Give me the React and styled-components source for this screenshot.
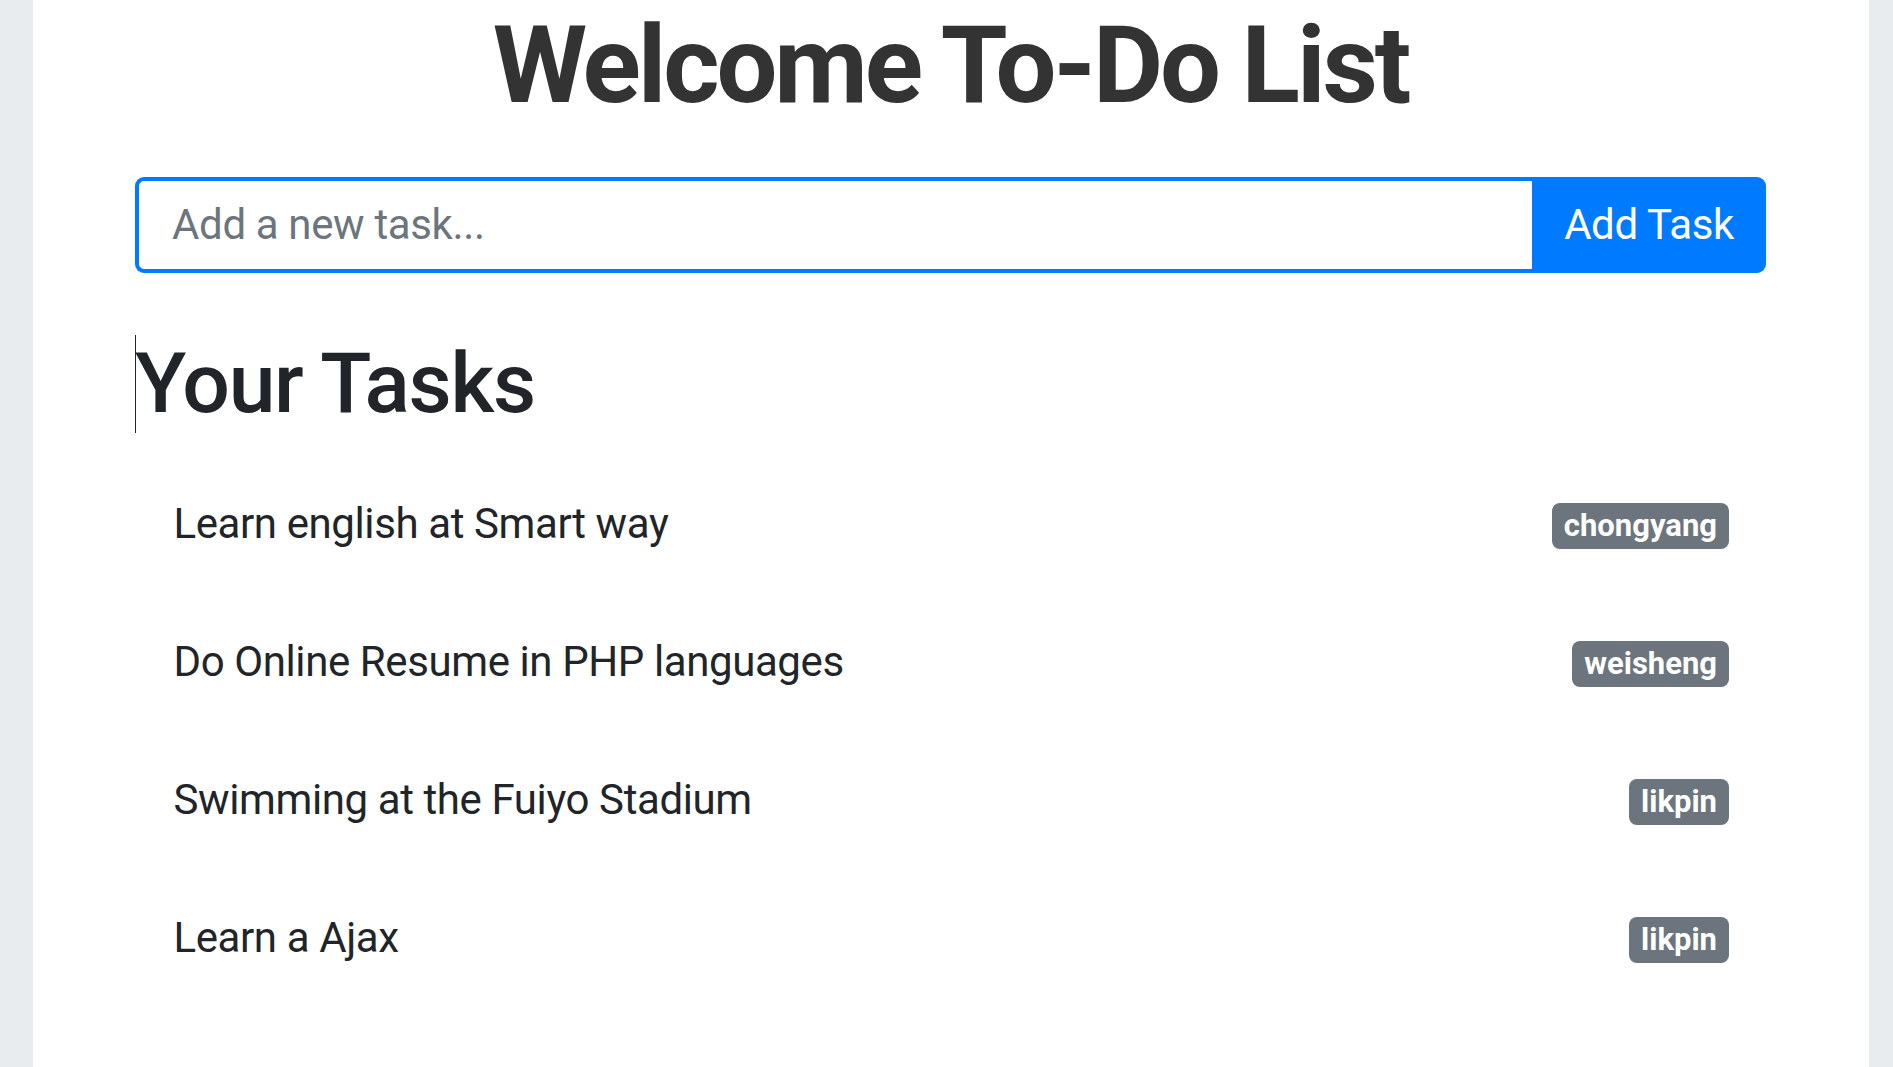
import React, { useState } from 'react';
import styled, { createGlobalStyle } from 'styled-components';

const GlobalStyle = createGlobalStyle`
  html, body {
    margin: 0;
    padding: 0;
    background: #e9ecef;
  }
  body {
    font-family: Roboto, "Liberation Sans", Arial, sans-serif;
    color: #212529;
  }
  * {
    box-sizing: border-box;
  }
`

const Page = styled.div`
  width: 1836px;
  min-height: 100vh;
  margin-left: 33px;
  padding: 1px 103px 40px 102px;
  background: #fff;
`

const Title = styled.h1`
  margin: 0 0 46px;
  font-size: 108px;
  line-height: 1.2;
  font-weight: 700;
  letter-spacing: -3.1px;
  color: #333;
  text-align: center;
`

const InputGroup = styled.form`
  display: flex;
  height: 96px;
`

const TaskInput = styled.input`
  flex: 1;
  min-width: 0;
  height: 100%;
  padding: 0 33px;
  border: 4px solid #007bff;
  border-right: none;
  border-radius: 9px 0 0 9px;
  font-family: inherit;
  font-size: 42px;
  letter-spacing: -0.35px;
  color: #495057;
  outline: none;
  &::placeholder {
    color: #6c757d;
  }
`

const AddButton = styled.button`
  width: 234px;
  height: 100%;
  border: none;
  border-radius: 0 9px 9px 0;
  background: #007bff;
  color: #fff;
  font-family: inherit;
  font-size: 42px;
  letter-spacing: -0.4px;
  cursor: pointer;
`

const Heading = styled.h2`
  position: relative;
  margin: 61px 0 20px;
  font-size: 84px;
  line-height: 1.2;
  font-weight: 500;
  letter-spacing: -1.3px;
  color: #212529;
  /* text caret sitting at the start of the heading */
  &::before {
    content: '';
    position: absolute;
    left: 0;
    top: 1px;
    width: 1px;
    height: 98px;
    background: #212529;
  }
`

const TaskList = styled.ul`
  list-style: none;
  margin: 0;
  padding: 0;
`

const TaskRow = styled.li`
  display: flex;
  align-items: center;
  justify-content: space-between;
  padding: 37.5px 37px 37.5px 38.5px;
  font-size: 42px;
  line-height: 1.5;
  letter-spacing: -0.4px;
`

const Badge = styled.span`
  display: inline-block;
  margin-top: 5px;
  padding: 7.5px 12px;
  border-radius: 8px;
  background: #6c757d;
  color: #fff;
  font-size: 31px;
  font-weight: 700;
  line-height: 1;
  letter-spacing: 0;
`

const initialTasks = [
  { id: 1, text: 'Learn english at Smart way', user: 'chongyang' },
  { id: 2, text: 'Do Online Resume in PHP languages', user: 'weisheng' },
  { id: 3, text: 'Swimming at the Fuiyo Stadium', user: 'likpin' },
  { id: 4, text: 'Learn a Ajax', user: 'likpin' },
];

const App = () => {
  const [tasks, setTasks] = useState(initialTasks);
  const [draft, setDraft] = useState('');

  const addTask = (e) => {
    e.preventDefault();
    if (!draft.trim()) return;
    setTasks([...tasks, { id: Date.now(), text: draft.trim(), user: 'likpin' }]);
    setDraft('');
  };

  return (
    <>
      <GlobalStyle />
      <Page>
        <Title>Welcome To-Do List</Title>
        <InputGroup onSubmit={addTask}>
          <TaskInput
            placeholder="Add a new task..."
            value={draft}
            onChange={e => setDraft(e.target.value)}
          />
          <AddButton type="submit">Add Task</AddButton>
        </InputGroup>
        <Heading>Your Tasks</Heading>
        <TaskList>
          {tasks.map(task => (
            <TaskRow key={task.id}>
              <span>{task.text}</span>
              <Badge>{task.user}</Badge>
            </TaskRow>
          ))}
        </TaskList>
      </Page>
    </>
  );
};

export default App;
